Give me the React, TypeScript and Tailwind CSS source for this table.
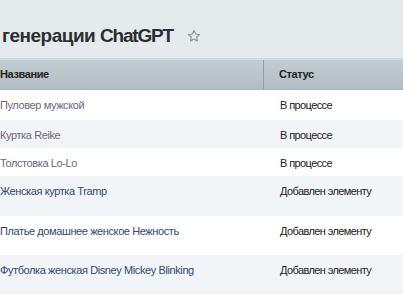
import React from "react";

type Row = { name: string; status: string; visited: boolean; h: string; bg: string };

const rows: Row[] = [
  { name: "Пуловер мужской", status: "В процессе", visited: true, h: "h-[30px]", bg: "bg-white" },
  { name: "Куртка Reike", status: "В процессе", visited: true, h: "h-[28px]", bg: "bg-[#f2f5f7]" },
  { name: "Толстовка Lo-Lo", status: "В процессе", visited: true, h: "h-[28px]", bg: "bg-white" },
  { name: "Женская куртка Tramp", status: "Добавлен элементу", visited: false, h: "h-[40px]", bg: "bg-[#f2f5f7]" },
  { name: "Платье домашнее женское Нежность", status: "Добавлен элементу", visited: false, h: "h-[39px]", bg: "bg-white" },
  { name: "Футболка женская Disney Mickey Blinking", status: "Добавлен элементу", visited: false, h: "h-[39px]", bg: "bg-[#f2f5f7]" },
];

function Star() {
  return (
    <svg width="14" height="14" viewBox="0 0 24 24" fill="none" stroke="#8b979c" strokeWidth="2" strokeLinejoin="round">
      <path d="M12 2.5l2.9 6.1 6.6.8-4.9 4.6 1.3 6.6L12 17.3l-5.9 3.3 1.3-6.6-4.9-4.6 6.6-.8z" />
    </svg>
  );
}

export default function App() {
  return (
    <div className="w-[403px] h-[294px] overflow-hidden bg-[#e5eaec] font-['Liberation_Sans',Arial,sans-serif]">
      <div className="h-[58px] flex items-center pl-[2px] pt-[12px]">
        <h1 className="text-[19px] font-bold text-[#2a2e30] tracking-[-0.5px] leading-none">
          генерации <span className="tracking-[-1.2px]">ChatGPT</span>
        </h1>
        <span className="ml-[14px] mt-[1px] flex items-center">
          <Star />
        </span>
      </div>
      <div className="h-[32px] flex bg-gradient-to-b from-[#c4ced2] to-[#b0bdc2] border-t-2 border-[#d3dadd] border-b border-b-[#a9b5ba] text-[11px] font-bold text-[#222] tracking-[-0.4px]">
        <div className="w-[264px] flex items-center border-r border-[#8f9ca1]">Название</div>
        <div className="flex-1 flex items-center pl-[15px]">Статус</div>
      </div>
      {rows.map((r) => (
        <div key={r.name} className={`${r.h} ${r.bg} flex items-start pt-[9px] text-[11px] leading-[13px]`}>
          <div className={`w-[264px] tracking-[-0.4px] ${r.visited ? "text-[#6e6482]" : "text-[#2f4a6b]"}`}>{r.name}</div>
          <div className="flex-1 pl-[16px] text-[#222] tracking-[-0.6px]">{r.status}</div>
        </div>
      ))}
    </div>
  );
}
